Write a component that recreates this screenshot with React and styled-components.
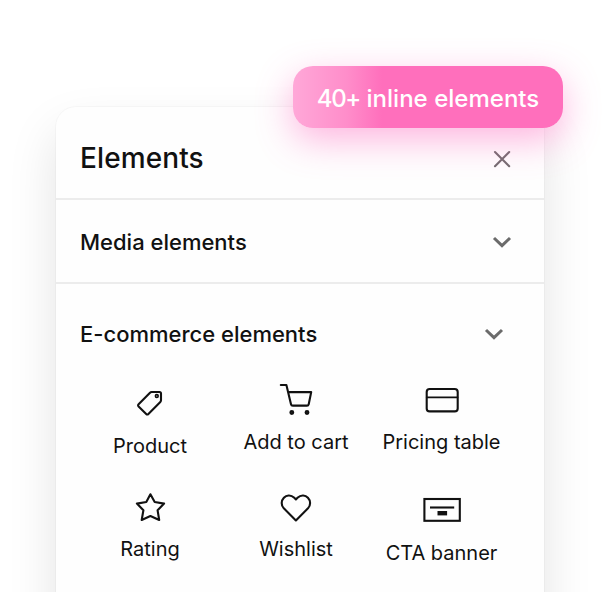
import React from "react";
import styled, { createGlobalStyle } from "styled-components";

const GlobalStyle = createGlobalStyle`
  * {
    box-sizing: border-box;
  }

  body {
    margin: 0;
    background: #fff;
    font-family: Inter, sans-serif;
    overflow: hidden;
  }

  h2,
  h3 {
    margin: 0;
    font-weight: 450;
  }
`;

const Page = styled.main`
  height: 592px;
  padding: 107px 64px 0 56px;
  overflow: hidden;
`;

const Panel = styled.section`
  position: relative;
  height: 620px;
  border-radius: 20px 20px 0 0;
  background: #fefefe;
  box-shadow: 0 0 0 1px rgba(0, 0, 0, 0.025), 0 24px 50px rgba(0, 0, 0, 0.115);
`;

const Badge = styled.div`
  position: absolute;
  top: -41px;
  right: -19px;
  width: 270px;
  height: 62px;
  display: flex;
  align-items: center;
  justify-content: center;
  padding-top: 3px;
  border-radius: 20px;
  background: linear-gradient(90deg, #ffa8d8 0%, #ff8dca 20%, #ff6fbc 33%);
  box-shadow: 0 12px 36px rgba(255, 80, 180, 0.42);
  color: #fff;
  font-size: 24px;
  font-weight: 450;
  letter-spacing: 0.02px;
  white-space: pre;
`;

const Count = styled.span`
  letter-spacing: -1.3px;
`;

const PanelHeader = styled.header`
  display: flex;
  align-items: center;
  justify-content: space-between;
  height: 93px;
  padding: 12px 32px 0 24px;
  border-bottom: 2px solid #ececec;
`;

const Title = styled.h2`
  margin-top: -1px;
  font-size: 28px;
  line-height: 36px;
  letter-spacing: 0.1px;
  color: #111;
`;

const SectionHeader = styled.div`
  display: flex;
  align-items: center;
  justify-content: space-between;
  height: ${(props) => (props.$open ? "99px" : "84px")};
  padding: ${(props) => (props.$open ? "1px 40px 0 24px" : "1px 32px 0 24px")};
  border-bottom: ${(props) => (props.$open ? "none" : "2px solid #ececec")};
`;

const SectionTitle = styled.h3`
  font-size: 22px;
  line-height: 30px;
  color: #111;
`;

const Grid = styled.div`
  display: grid;
  grid-template-columns: 146px 146px 145px;
  grid-auto-rows: 107px;
  padding-left: 21px;
`;

const Tile = styled.div`
  display: flex;
  flex-direction: column;
  align-items: center;
  gap: 13px;
  padding-top: ${(props) => props.$offset || 0}px;
  color: #111;
`;

const Label = styled.span`
  font-size: 20px;
  line-height: 24px;
  white-space: nowrap;
`;

const Icon = styled.svg`
  flex: none;
  display: block;
  fill: none;
  stroke: ${(props) => props.$color || "#111"};
  stroke-width: ${(props) => props.$stroke || 2.1};
  stroke-linecap: round;
  stroke-linejoin: round;
`;

const CloseIcon = () => (
  <Icon width="20" height="20" viewBox="0 0 20 20" $color="#736c70">
    <path d="M3 3L17.2 17.2M17.2 3L3 17.2" />
  </Icon>
);

const ChevronIcon = () => (
  <Icon width="20" height="12" viewBox="0 0 20 12" $color="#6b6b6b" $stroke={3}>
    <path d="M2 2L10 9.7L18 2" strokeLinecap="butt" strokeLinejoin="miter" />
  </Icon>
);

const TagIcon = () => (
  <Icon width="40" height="34" viewBox="0 0 40 34">
    <path d="M21.6 5H29.5Q31 5 31 6.5V13.2Q31 14.2 30.3 14.9L18.4 26.9Q17.3 28 16.2 26.9L8.6 19.4Q7.5 18.3 8.6 17.2L20 5.7Q20.7 5 21.6 5Z" />
    <circle cx="26.8" cy="9" r="1.4" strokeWidth="1.6" />
  </Icon>
);

const CartIcon = () => (
  <Icon width="40" height="34" viewBox="0 0 40 34">
    <path d="M4.8 2H10.4L15 21.2Q15.3 22.6 16.8 22.6H31Q32.4 22.6 32.7 21.2L35.2 9.1H12.2" />
    <circle cx="15.8" cy="29.5" r="1.4" fill="#555" />
    <circle cx="31" cy="29.5" r="1.4" fill="#555" />
  </Icon>
);

const TableIcon = () => (
  <Icon width="40" height="34" viewBox="0 0 40 34">
    <rect x="4.7" y="6" width="31" height="22.4" rx="3" />
    <path d="M4.7 14.3H35.5" strokeWidth="1.7" />
  </Icon>
);

const StarIcon = () => (
  <Icon width="40" height="34" viewBox="0 0 40 34">
    <path d="M20.4 4.3L24.7 12L34.1 13.6L27.6 20.3L29.2 30L20.4 26L11.7 30L13.4 20.3L6.9 13.6L16.3 12Z" />
  </Icon>
);

const HeartIcon = () => (
  <Icon width="40" height="34" viewBox="0 0 40 34">
    <path d="M19.9 30.4L7.8 18.3C1.5 11.5 10.8 0.7 18.3 7.8L19.9 9.4L21.5 7.8C29 0.7 38.3 11.5 32 18.3Z" />
  </Icon>
);

const BannerIcon = () => (
  <Icon width="40" height="34" viewBox="0 0 40 34">
    <rect x="2.4" y="5" width="35.4" height="21.8" strokeLinejoin="miter" />
    <path d="M8 13.5H32.2" strokeLinecap="butt" />
    <rect x="15.5" y="17" width="9.6" height="4.4" fill="#111" stroke="none" />
  </Icon>
);

const elements = [
  { label: "Product", icon: TagIcon, offset: 4 },
  { label: "Add to cart", icon: CartIcon },
  { label: "Pricing table", icon: TableIcon },
  { label: "Rating", icon: StarIcon },
  { label: "Wishlist", icon: HeartIcon },
  { label: "CTA banner", icon: BannerIcon, offset: 4 },
];

export default function App() {
  return (
    <>
      <GlobalStyle />
      <Page>
        <Panel>
          <PanelHeader>
            <Title>Elements</Title>
            <CloseIcon />
          </PanelHeader>
          <SectionHeader>
            <SectionTitle>Media elements</SectionTitle>
            <ChevronIcon />
          </SectionHeader>
          <SectionHeader $open>
            <SectionTitle>E-commerce elements</SectionTitle>
            <ChevronIcon />
          </SectionHeader>
          <Grid>
            {elements.map(({ label, icon: ElementIcon, offset }) => (
              <Tile key={label} $offset={offset}>
                <ElementIcon />
                <Label>{label}</Label>
              </Tile>
            ))}
          </Grid>
          <Badge>
            <Count>40+</Count> inline elements
          </Badge>
        </Panel>
      </Page>
    </>
  );
}
